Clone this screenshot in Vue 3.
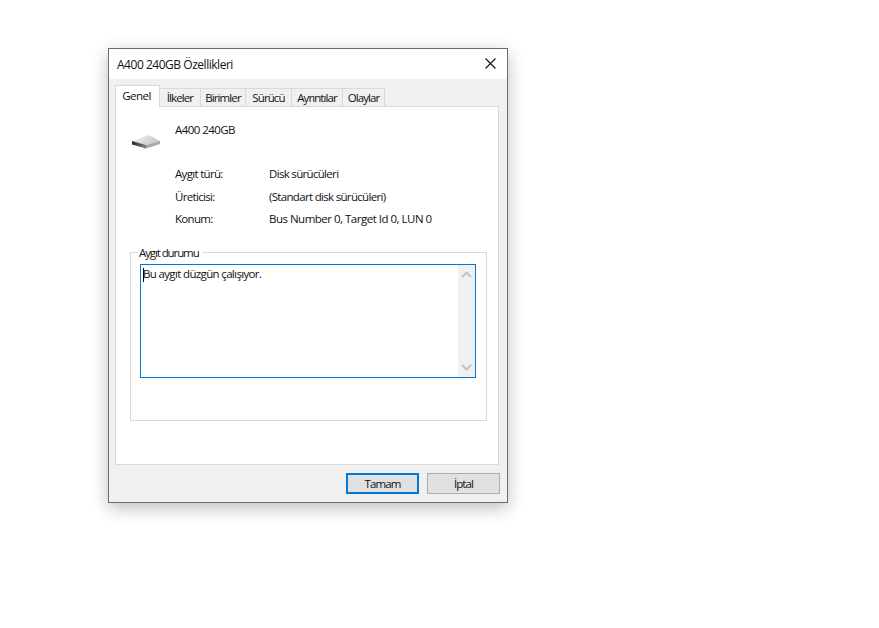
<script setup>
const rows = [
  { label: 'Aygıt türü:', value: 'Disk sürücüleri' },
  { label: 'Üreticisi:', value: '(Standart disk sürücüleri)' },
  { label: 'Konum:', value: 'Bus Number 0, Target Id 0, LUN 0' },
]
const tabs = ['İlkeler', 'Birimler', 'Sürücü', 'Ayrıntılar', 'Olaylar']
</script>

<template>
  <div class="page">
    <section class="dialog">
      <header class="titlebar">
        <span class="title">A400 240GB Özellikleri</span>
        <svg class="close" width="11" height="11" viewBox="0 0 11 11">
          <path d="M0.5 0.5 L10.5 10.5 M10.5 0.5 L0.5 10.5" stroke="#111" stroke-width="1.1" fill="none" />
        </svg>
      </header>
      <div class="body">
        <nav class="tabs">
          <span class="tab active">Genel</span>
          <span v-for="t in tabs" :key="t" class="tab">{{ t }}</span>
        </nav>
        <div class="panel">
          <div class="device">
            <svg class="disk" width="30" height="16" viewBox="0 0 30 16">
              <defs>
                <linearGradient id="top" x1="0" y1="0" x2="1" y2="0.4">
                  <stop offset="0" stop-color="#f6f6f6" />
                  <stop offset="1" stop-color="#c8c8c8" />
                </linearGradient>
                <linearGradient id="front" x1="0" y1="0" x2="1" y2="0">
                  <stop offset="0" stop-color="#2e2e2e" />
                  <stop offset="1" stop-color="#777" />
                </linearGradient>
              </defs>
              <path d="M1 7 L18 1 L29 7 L15 11 Z" fill="url(#top)" />
              <path d="M1 7 L15 11 L15 14.5 L1 10.5 Z" fill="url(#front)" />
              <path d="M15 11 L29 7 L29 10 L15 14.5 Z" fill="#a8a8a8" />
              <path d="M11 11.2 L13.5 12 L13.5 13.5 L11 12.7 Z" fill="#3fae3f" />
            </svg>
            <span class="device-name">A400 240GB</span>
          </div>
          <dl class="props">
            <template v-for="r in rows" :key="r.label">
              <dt>{{ r.label }}</dt>
              <dd>{{ r.value }}</dd>
            </template>
          </dl>
          <fieldset class="group">
            <legend>Aygıt durumu</legend>
            <div class="status">
              <span class="caret"></span>
              <span class="status-text">Bu aygıt düzgün çalışıyor.</span>
              <div class="scroll">
                <svg width="11" height="7" viewBox="0 0 11 7"><path d="M1 6 L5.5 1.5 L10 6" stroke="#c4c4c4" stroke-width="2" fill="none" /></svg>
                <svg width="11" height="7" viewBox="0 0 11 7"><path d="M1 1 L5.5 5.5 L10 1" stroke="#c4c4c4" stroke-width="2" fill="none" /></svg>
              </div>
            </div>
          </fieldset>
        </div>
        <footer class="actions">
          <button class="btn primary">Tamam</button>
          <button class="btn">İptal</button>
        </footer>
      </div>
    </section>
  </div>
</template>

<style>
html, body { margin: 0; background: #fff; }
</style>

<style scoped>
.page {
  width: 879px;
  height: 628px;
  padding: 48px 0 0 108px;
  box-sizing: border-box;
  overflow: hidden;
  background: #fff;
  font-family: "Open Sans", "Noto Sans", sans-serif;
  font-size: 11.5px;
  letter-spacing: -0.68px;
  color: #111;
}
.dialog {
  width: 400px;
  height: 455px;
  box-sizing: border-box;
  border: 1px solid #6b6b6b;
  background: #f0f0f0;
  box-shadow: 0 5px 16px rgba(0, 0, 0, 0.26);
  display: flex;
  flex-direction: column;
}
.titlebar {
  height: 30px;
  flex: none;
  background: #fff;
  display: flex;
  align-items: center;
  justify-content: space-between;
  padding: 0 11px 0 8px;
}
.title { font-size: 12px; letter-spacing: -0.47px; }
.close { display: block; margin-top: -2px; }
.body {
  flex: 1;
  padding: 6px 7px 0 6px;
  display: flex;
  flex-direction: column;
}
.tabs {
  display: flex;
  height: 21px;
  align-items: flex-end;
  position: relative;
  z-index: 1;
}
.tab {
  height: 18px;
  line-height: 18px;
  border: 1px solid #d9d9d9;
  border-left-width: 0;
  border-bottom: 0;
  background: #f0f0f0;
  box-sizing: border-box;
  text-align: center;
  letter-spacing: -0.9px;
}
.tab:nth-child(2) { width: 41px; }
.tab:nth-child(3) { width: 45px; }
.tab:nth-child(4) { width: 46px; }
.tab:nth-child(5) { width: 51px; }
.tab:nth-child(6) { width: 42px; }
.tab.active {
  width: 45px;
  height: 22px;
  line-height: 19px;
  padding-right: 2px;
  background: #fff;
  border-left-width: 1px;
  margin-bottom: -1px;
  letter-spacing: -0.55px;
}
.panel {
  width: 384px;
  height: 359px;
  box-sizing: border-box;
  background: #fff;
  border: 1px solid #d9d9d9;
  padding: 15px 11px 0 14px;
}
.device {
  display: flex;
  align-items: flex-start;
  height: 38px;
}
.disk { margin: 12px 14px 0 1px; flex: none; display: block; }
.device-name { line-height: 16px; letter-spacing: -0.55px; }
.props {
  margin: 0 0 0 45px;
  display: grid;
  grid-template-columns: 94px 1fr;
  grid-auto-rows: 22.5px;
  line-height: 18px;
  padding-top: 5px;
}
.props dt, .props dd { margin: 0; }
.props dd:last-child { letter-spacing: -0.5px; }
.group {
  margin: 13px 0 0 0;
  padding: 0 10px 0 9px;
  width: 357px;
  height: 175px;
  box-sizing: border-box;
  border: 1px solid #d9d9d9;
}
.group legend {
  margin-left: -2px;
  padding: 0 3px 0 1px;
  line-height: 14px;
  height: 14px;
  letter-spacing: -1.1px;
}
.status {
  position: relative;
  margin-top: 4px;
  height: 114px;
  box-sizing: border-box;
  border: 1px solid #0078d7;
  padding: 1px 2px;
  line-height: 16px;
}
.status-text { display: block; letter-spacing: -0.65px; }
.caret {
  position: absolute;
  left: 2px;
  top: 3px;
  width: 1px;
  height: 14px;
  background: #000;
}
.scroll {
  position: absolute;
  right: 0;
  top: 0;
  bottom: 0;
  width: 17px;
  background: #f0f0f0;
  display: flex;
  flex-direction: column;
  justify-content: space-between;
  align-items: center;
  padding: 6px 0;
  box-sizing: border-box;
}
.scroll svg { display: block; }
.actions {
  display: flex;
  justify-content: flex-end;
  gap: 8px;
  margin-top: 8px;
}
.btn {
  width: 73px;
  height: 21px;
  padding: 0;
  box-sizing: border-box;
  border: 1px solid #adadad;
  background: #e1e1e1;
  font: inherit;
  letter-spacing: -0.9px;
  color: #111;
}
.btn.primary { border: 2px solid #0078d7; }
</style>
